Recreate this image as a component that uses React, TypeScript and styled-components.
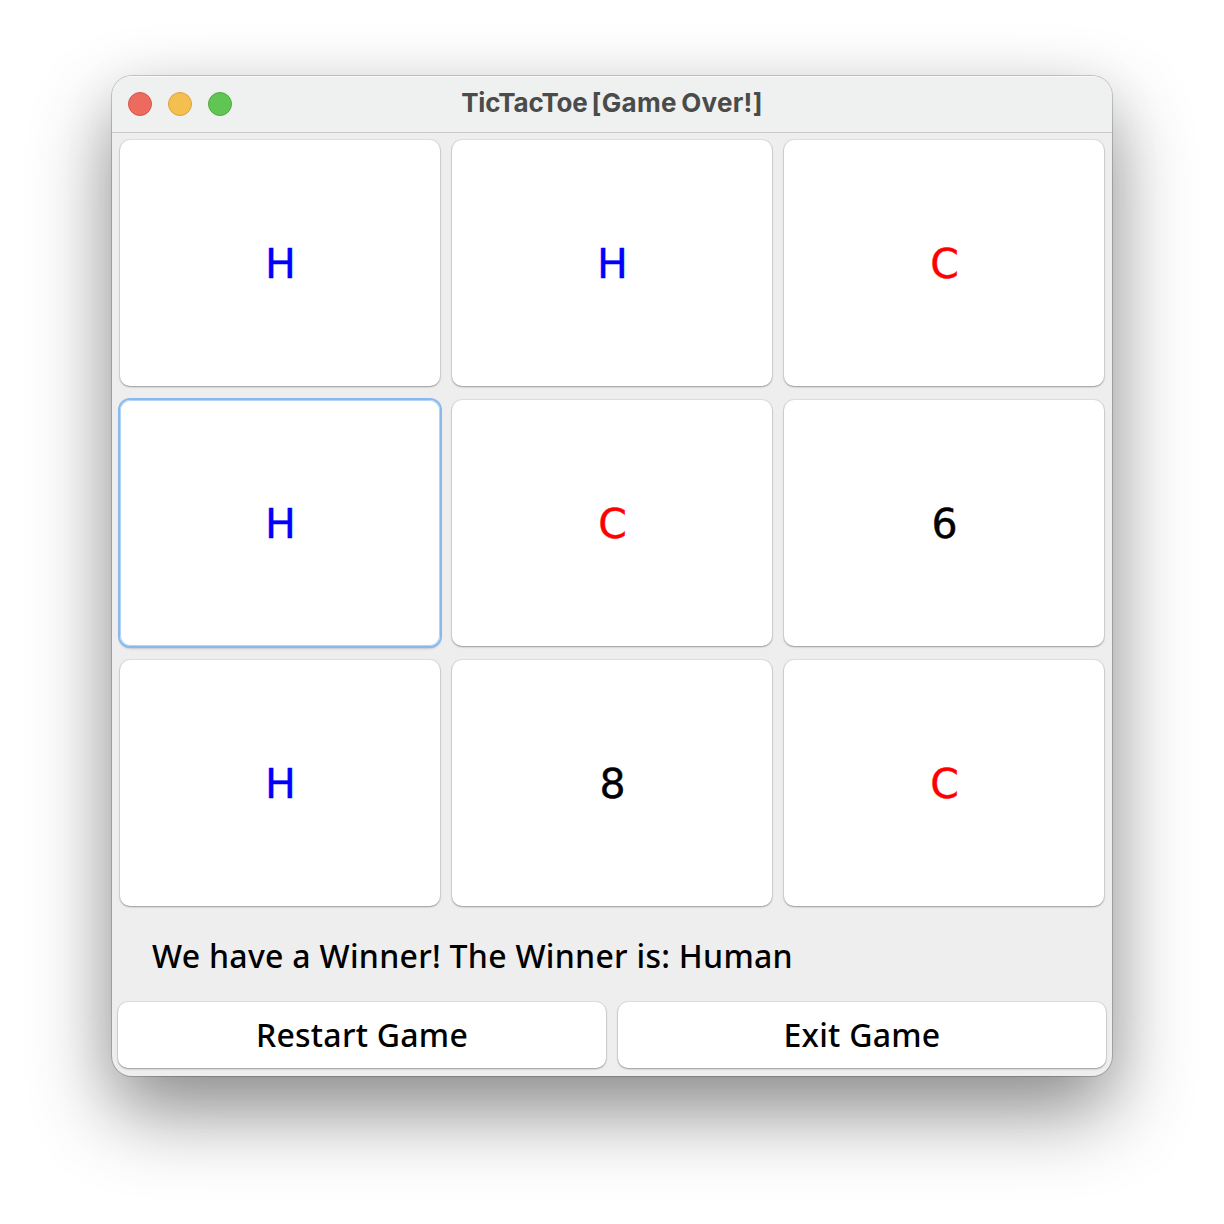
import React from "react";
import styled, { createGlobalStyle } from "styled-components";

const GlobalStyle = createGlobalStyle`
  * { box-sizing: border-box; }
  body { margin: 0; background: #fff; overflow: hidden; }
`;

const Desktop = styled.main`
  width: 1224px;
  height: 1224px;
  padding: 76px 112px 0;
  background: #fff;
`;

const Window = styled.section`
  width: 1000px;
  height: 1000px;
  display: flex;
  flex-direction: column;
  border-radius: 20px;
  background: #eeeeee;
  overflow: hidden;
  box-shadow: 0 0 0 1px rgba(0, 0, 0, 0.17), 0 0 2px rgba(0, 0, 0, 0.08), 0 36px 80px rgba(0, 0, 0, 0.44), 0 10px 60px rgba(0, 0, 0, 0.06);
`;

const TitleBar = styled.header`
  height: 57px;
  flex: none;
  display: grid;
  grid-template-columns: 1fr auto 1fr;
  align-items: center;
  padding: 0 16px;
  background: #eff1f0;
  border-bottom: 1px solid #c8cac9;
  box-shadow: inset 0 1px 0 #f8f9f8;
`;

const Lights = styled.div`
  display: flex;
  gap: 16px;
`;

const Light = styled.span<{ $fill: string; $edge: string }>`
  width: 24px;
  height: 24px;
  border-radius: 50%;
  background: ${(p) => p.$fill};
  border: 1px solid ${(p) => p.$edge};
`;

const Title = styled.h1`
  margin: 0;
  padding-bottom: 2px;
  font: 700 26px/30px Inter, sans-serif;
  letter-spacing: -0.2px;
  word-spacing: -2px;
  color: #4a4b4b;
  white-space: nowrap;
`;

const Caption = styled.span`
  letter-spacing: 0.3px;
`;

const Board = styled.div`
  display: grid;
  grid-template-columns: repeat(3, 320px);
  grid-auto-rows: 246px;
  gap: 14px 12px;
  padding: 7px 8px 0;
`;

const Button = styled.button`
  border: 0;
  padding: 0;
  border-radius: 10px;
  background: #fff;
  color: #000;
  box-shadow: 0 0 0 1px rgba(0, 0, 0, 0.06), 0 1px 2px rgba(0, 0, 0, 0.32);
`;

const Cell = styled(Button)<{ $ink: string; $focused: boolean }>`
  padding: 2px 0 0 1px;
  font: 400 41px/48px "DejaVu Sans", sans-serif;
  -webkit-text-stroke: 0.4px currentColor;
  color: ${(p) => p.$ink};
  ${(p) => p.$focused && "box-shadow: 0 0 0 2px #87b9ee, inset 0 0 0 1px #b5d4f5, 0 2px 3px rgba(0, 0, 0, 0.35);"}
`;

const Status = styled.p`
  margin: 0;
  padding: 30px 40px 0;
  height: 96px;
  font: 500 32px/40px "Noto Sans", sans-serif;
  letter-spacing: 0.28px;
  color: #000;
  white-space: nowrap;
`;

const Actions = styled.footer`
  display: grid;
  grid-template-columns: 1fr 1fr;
  grid-auto-rows: 66px;
  gap: 12px;
  padding: 0 6px;
`;

const Action = styled(Button)`
  padding-bottom: 1px;
  font: 500 32px/40px "Noto Sans", sans-serif;
  letter-spacing: 0.25px;
`;

const inks: Record<string, string> = { H: "#0000ff", C: "#ff0000" };
const cells = ["H", "H", "C", "H", "C", "6", "H", "8", "C"];

export default function App() {
  return (
    <Desktop>
      <GlobalStyle />
      <Window>
        <TitleBar>
          <Lights>
            <Light $fill="#ed6a5e" $edge="#d65549" />
            <Light $fill="#f5bf4f" $edge="#d9a23d" />
            <Light $fill="#61c554" $edge="#50a842" />
          </Lights>
          <Title>TicTacToe <Caption>[Game Over!]</Caption></Title>
        </TitleBar>
        <Board>
          {cells.map((mark, i) => (
            <Cell key={i} $ink={inks[mark] ?? "#000"} $focused={i === 3}>{mark}</Cell>
          ))}
        </Board>
        <Status>We have a Winner! The Winner is: Human</Status>
        <Actions>
          <Action>Restart Game</Action>
          <Action>Exit Game</Action>
        </Actions>
      </Window>
    </Desktop>
  );
}
